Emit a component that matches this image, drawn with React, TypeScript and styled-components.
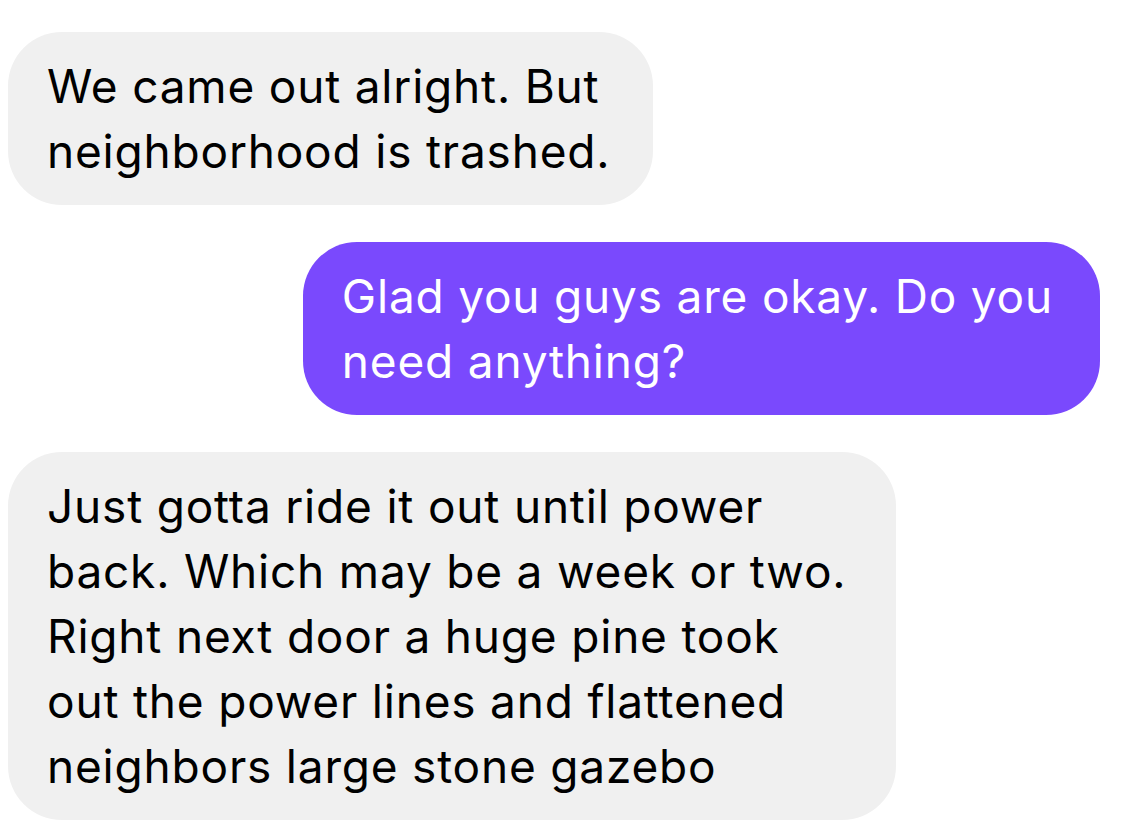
import styled, { createGlobalStyle } from "styled-components";

const GlobalStyle = createGlobalStyle`
  html, body {
    margin: 0;
    padding: 0;
    background: #ffffff;
  }
  body {
    font-family: "Inter", "Liberation Sans", sans-serif;
    -webkit-font-smoothing: antialiased;
  }
`;

type Message = {
  id: number;
  mine: boolean;
  tail: number; // right padding, the bubbles are not all the same
  lines: string[];
};

const messages: Message[] = [
  { id: 1, mine: false, tail: 43, lines: ["We came out alright. But", "neighborhood is trashed."] },
  { id: 2, mine: true, tail: 47, lines: ["Glad you guys are okay. Do you", "need anything?"] },
  {
    id: 3,
    mine: false,
    tail: 50,
    lines: [
      "Just gotta ride it out until power",
      "back. Which may be a week or two.",
      "Right next door a huge pine took",
      "out the power lines and flattened",
      "neighbors large stone gazebo",
    ],
  },
];

export default function App() {
  return (
    <>
      <GlobalStyle />
      <Thread>
        {messages.map((m) => (
          <Row key={m.id} $mine={m.mine}>
            <Bubble $mine={m.mine} $tail={m.tail}>
              {m.lines.map((line, i) => (
                <Line key={i}>{line}</Line>
              ))}
            </Bubble>
          </Row>
        ))}
      </Thread>
    </>
  );
}

const Thread = styled.div`
  display: flex;
  flex-direction: column;
  gap: 37px;
  width: 1124px;
  height: 827px;
  padding: 32px 24px 0 8px;
  box-sizing: border-box;
  overflow: hidden;
`;

const Row = styled.div<{ $mine: boolean }>`
  display: flex;
  justify-content: ${(p) => (p.$mine ? "flex-end" : "flex-start")};
`;

const Bubble = styled.div<{ $mine: boolean; $tail: number }>`
  display: flex;
  flex-direction: column;
  padding: 22px ${(p) => p.$tail}px 21px 39px;
  border-radius: 54px;
  background: ${(p) => (p.$mine ? "#7a49fd" : "#f0f0f0")};
  color: ${(p) => (p.$mine ? "#ffffff" : "#000000")};
  font-size: 46px;
  line-height: 65px;
  font-weight: 400;
  letter-spacing: 0.8px;
`;

const Line = styled.span`
  white-space: nowrap;
`;
